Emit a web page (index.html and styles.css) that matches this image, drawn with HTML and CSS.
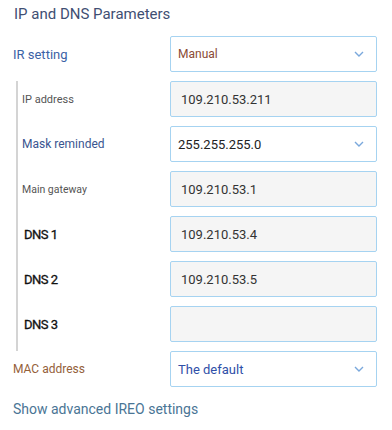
FILE: index.html
```html
<!DOCTYPE html>
<html lang="en">
<head>
  <meta charset="UTF-8" />
  <meta name="viewport" content="width=device-width, initial-scale=1.0"/>
  <title>IP and DNS Parameters</title>
  <link rel="stylesheet" href="styles.css">
</head>
<body>

<section class="params">
  <h2>IP and DNS Parameters</h2>

  <div class="row">
    <label class="lbl lbl-ir">IR setting</label>
    <div class="field select">
      <span class="val val-manual">Manual</span>
      <svg class="chev" width="10" height="6" viewBox="0 0 10 6"><path d="M1 1l4 4 4-4" fill="none" stroke="#7aa8dc" stroke-width="1.4"/></svg>
    </div>
  </div>

  <div class="group">
    <div class="row">
      <label class="lbl lbl-small">IP address</label>
      <div class="field input"><span class="val">109.210.53.211</span></div>
    </div>
    <div class="row">
      <label class="lbl lbl-mask">Mask reminded</label>
      <div class="field select">
        <span class="val val-dark">255.255.255.0</span>
        <svg class="chev" width="10" height="6" viewBox="0 0 10 6"><path d="M1 1l4 4 4-4" fill="none" stroke="#7aa8dc" stroke-width="1.4"/></svg>
      </div>
    </div>
    <div class="row">
      <label class="lbl lbl-tiny">Main gateway</label>
      <div class="field input"><span class="val">109.210.53.1</span></div>
    </div>
    <div class="row">
      <label class="lbl lbl-dns">DNS 1</label>
      <div class="field input"><span class="val">109.210.53.4</span></div>
    </div>
    <div class="row">
      <label class="lbl lbl-dns">DNS 2</label>
      <div class="field input"><span class="val">109.210.53.5</span></div>
    </div>
    <div class="row">
      <label class="lbl lbl-dns">DNS 3</label>
      <div class="field input"><span class="val"></span></div>
    </div>
  </div>

  <div class="row">
    <label class="lbl lbl-mac">MAC address</label>
    <div class="field select">
      <span class="val val-blue">The default</span>
      <svg class="chev" width="10" height="6" viewBox="0 0 10 6"><path d="M1 1l4 4 4-4" fill="none" stroke="#7aa8dc" stroke-width="1.4"/></svg>
    </div>
  </div>

  <a class="advanced" href="#">Show advanced IREO settings</a>
</section>

</body>
</html>
```

FILE: styles.css
```css
* { box-sizing: border-box; }
body {
  margin: 0;
  padding: 0;
  background: #fff;
  font-family: Roboto, 'Noto Sans', sans-serif;
  color: #333;
}
.params {
  padding: 4px 15px 0 13px;
}
h2 {
  margin: 0 0 12px 1px;
  font-size: 15px;
  line-height: 20px;
  font-weight: 400;
  color: #3f4f73;
}
.row {
  display: grid;
  grid-template-columns: 1fr 207px;
  align-items: center;
  padding-bottom: 9px;
}
.group {
  margin-left: 3px;
  padding-left: 4px;
  border-left: 2px solid #d4d4d4;
}
.lbl {
  font-size: 13px;
  color: #333;
}
.lbl-ir { color: #3b62a6; }
.lbl-small { font-size: 11px; color: #555; }
.lbl-mask { font-size: 12px; color: #3a5590; }
.lbl-tiny { font-size: 10.5px; color: #555; }
.lbl-dns {
  font-size: 13px;
  font-weight: 400;
  color: #111;
  letter-spacing: -0.5px;
  padding-left: 2px;
  -webkit-text-stroke: 0.3px #111;
}
.lbl-mac { font-size: 12px; color: #94603a; }
.field {
  height: 36px;
  border: 1px solid #a6d3f1;
  border-radius: 2px;
  display: flex;
  align-items: center;
  justify-content: space-between;
  padding: 0 12px 0 10px;
  font-size: 13px;
}
.input { background: #f5f5f5; }
.select { background: #fff; padding-left: 7px; }
.val { color: #333; }
.val-manual { color: #8a4b36; font-size: 12px; }
.val-dark { color: #222; }
.val-blue { color: #2f4fa8; }
.chev { display: block; }
.advanced {
  display: block;
  margin-top: 5px;
  font-size: 14px;
  color: #4a7595;
  text-decoration: none;
}
```
